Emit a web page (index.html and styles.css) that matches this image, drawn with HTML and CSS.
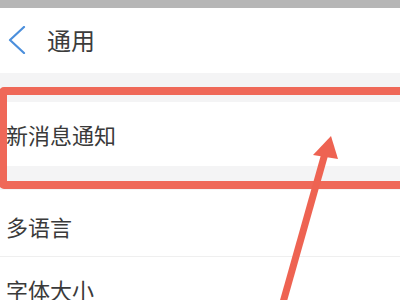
FILE: index.html
```html
<!DOCTYPE html>
<html lang="zh-CN">
<head>
<meta charset="utf-8">
<link rel="stylesheet" href="styles.css">
</head>
<body>
<div class="screen">
  <div class="statusbar"></div>
  <div class="header">
    <svg class="back" width="18" height="28" viewBox="0 0 18 28"><polyline points="16,1 2,14 16,27" fill="none" stroke="#4b8fdc" stroke-width="2.2" stroke-linecap="round" stroke-linejoin="round"/></svg>
    <span class="title">通用</span>
  </div>
  <div class="gap gap-top"></div>
  <div class="item item-first">新消息通知</div>
  <div class="gap gap-mid"></div>
  <div class="item item-lang">多语言</div>
  <div class="item item-font">字体大小</div>

  <div class="highlight"></div>
  <svg class="arrow" width="400" height="300" viewBox="0 0 400 300">
    <line x1="282" y1="306" x2="326" y2="150" stroke="#ee6352" stroke-width="7"/>
    <polygon points="331,136 313,155 338,159" fill="#ee6352"/>
  </svg>
</div>
</body>
</html>
```

FILE: styles.css
```css
html, body {
  margin: 0;
  padding: 0;
  background: #ffffff;
}
.screen {
  position: relative;
  width: 400px;
  height: 300px;
  overflow: hidden;
  font-family: "Noto Sans CJK SC", "Noto Sans", sans-serif;
  color: #3a3a3a;
}
.statusbar {
  height: 8px;
  background: #b6b6b6;
}
.header {
  height: 65px;
  display: flex;
  align-items: center;
  padding-left: 8px;
  background: #ffffff;
}
.back {
  display: block;
  margin-top: -2px;
}
.title {
  margin-left: 21px;
  font-size: 24px;
  color: #3c3c3c;
  margin-top: -2px;
}
.gap {
  background: #f4f4f5;
}
.gap-top {
  height: 29px;
}
.gap-mid {
  height: 24px;
}
.item {
  display: flex;
  align-items: center;
  padding-left: 6px;
  font-size: 22px;
  background: #ffffff;
}
.item-first {
  height: 64px;
}
.item-lang {
  height: 67px;
  padding-top: 6px;
  box-sizing: border-box;
  border-bottom: 1px solid #efefef;
}
.item-font {
  height: 64px;
}
.highlight {
  position: absolute;
  left: -1px;
  top: 87px;
  width: 420px;
  height: 102px;
  box-sizing: border-box;
  border: 8px solid #ef6858;
  border-radius: 5px;
}
.arrow {
  position: absolute;
  left: 0;
  top: 0;
}
```
